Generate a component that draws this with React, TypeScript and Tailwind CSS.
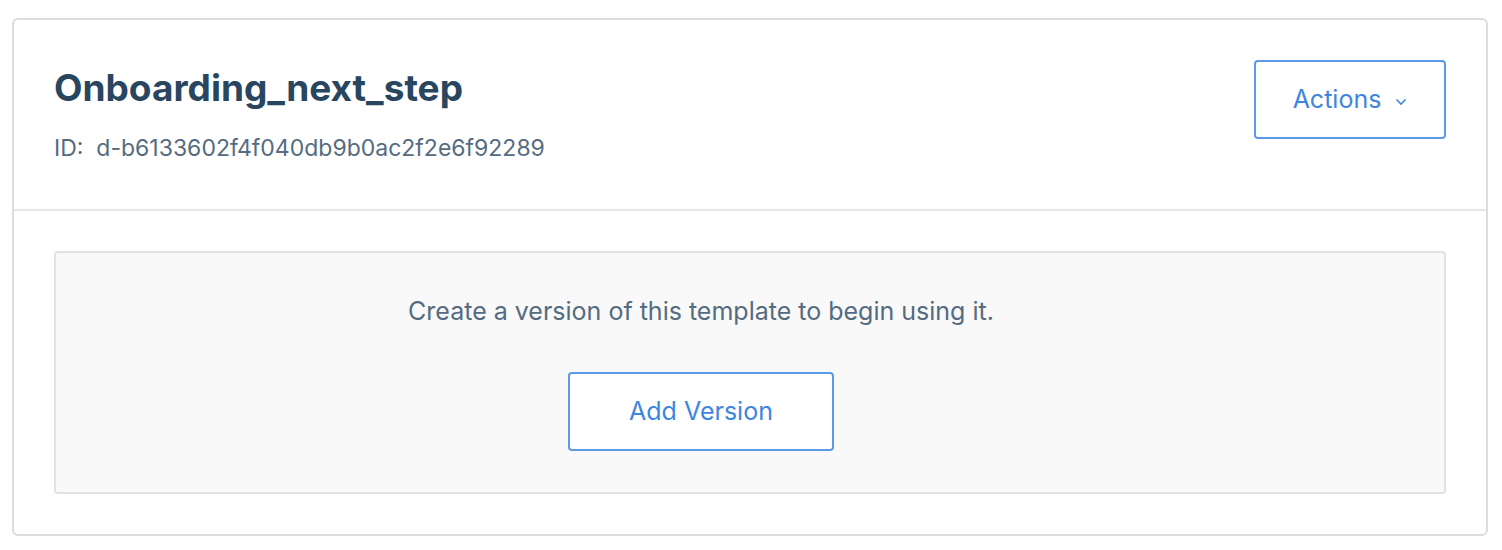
import React from "react";

export default function App() {
  return (
    <div className="w-[1502px] h-[550px] bg-white pl-[12px] pt-[18px]" style={{ fontFamily: "Inter, 'Noto Sans', sans-serif" }}>
      <div className="w-[1476px] h-[518px] border-2 border-[#dcdcdc] rounded-[6px] bg-white flex flex-col">
        <div className="h-[192px] border-b-2 border-[#e6e6e6] px-[40px] pt-[40px] flex justify-between items-start">
          <div className="flex flex-col">
            <h1 className="text-[37px] leading-[44px] font-bold text-[#294661] mt-[6px]">Onboarding_next_step</h1>
            <div className="text-[23px] leading-[30px] text-[#546b81] mt-[23px]">
              ID:&nbsp;&nbsp;d-b6133602f4f040db9b0ac2f2e6f92289
            </div>
          </div>
          <button className="w-[192px] h-[79px] border-2 border-[#5a9ae6] rounded-[4px] bg-white flex items-center justify-center gap-[14px] text-[#3d85de] text-[25px]">
            <span>Actions</span>
            <svg width="12" height="8" viewBox="0 0 12 8" className="mt-[4px]">
              <path d="M1.5 1.5 L6 6 L10.5 1.5" fill="none" stroke="#3d85de" strokeWidth="1.6" />
            </svg>
          </button>
        </div>
        <div className="p-[40px]">
          <div className="h-[243px] bg-[#f9f9f9] border-2 border-[#e2e2e2] rounded-[4px] flex flex-col items-center pt-[38px] pr-[98px]">
            <p className="text-[25px] leading-[40px] text-[#546b81]">Create a version of this template to begin using it.</p>
            <button className="mt-[41px] w-[266px] h-[79px] border-2 border-[#5a9ae6] rounded-[4px] bg-white text-[#3d85de] text-[25px]">
              Add Version
            </button>
          </div>
        </div>
      </div>
    </div>
  );
}
